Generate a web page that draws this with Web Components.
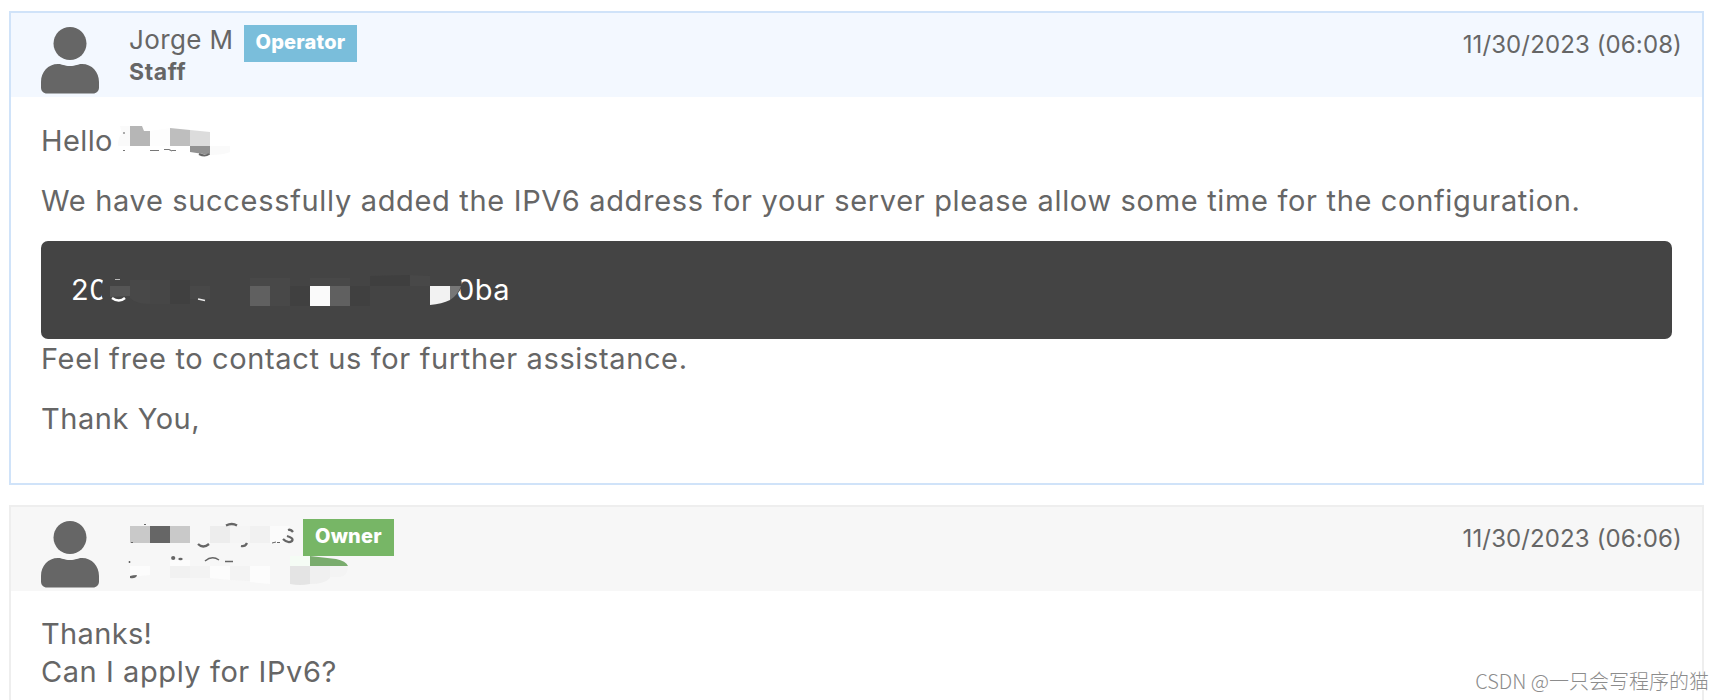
<!DOCTYPE html>
<html lang="en">
<head>
<meta charset="utf-8">
<title>Ticket</title>
<style>
    html, body {
        margin: 0;
        height: 700px;
        overflow: hidden;
        background: #fff;
    }
    body {
        font-family: Inter, "Liberation Sans", sans-serif;
        color: #666;
    }
    svg { display: block; flex: none; overflow: visible; }
</style>
</head>
<body>
<ticket-thread>
    <ticket-reply kind="staff">
        <span slot="name">Jorge M</span>
        <role-badge slot="badge" color="#7abedb">Operator</role-badge>
        <span slot="detail">Staff</span>
        <span slot="date">11/30/2023 (06:08)</span>
        <reply-line gap style="letter-spacing: 0.4px">Hello
            <svg slot="mask" width="112" height="38" viewBox="118 122 112 38">
                <path d="M120 126h10v20h-12q0-10 4-12z" fill="#fafafa"/>
                <path d="M130 126h12l2 5h6v15h-20z" fill="#b6b6b6"/>
                <path d="M150 131l20-3v18h-20z" fill="#fdfdfd"/>
                <path d="M170 128l20 2v16h-20z" fill="#bebebe"/>
                <path d="M190 130l20 2v14h-20z" fill="#dcdcdc"/>
                <path d="M190 146h20v9l-20-3z" fill="#929292"/>
                <path d="M210 146h20v6q-6 3-20 3z" fill="#fafafa"/>
                <path d="M199 154q6 3 10 0" fill="none" stroke="#666" stroke-width="2"/>
                <path d="M150 150.500h9M164 149.500h5l3 1.500M172 150.500h4M124 132v2M123 150.500h2" fill="none" stroke="#777" stroke-width="1.200"/>
            </svg>
        </reply-line>
        <reply-line gap style="letter-spacing: 0.67px">We have successfully added the IPV6 address for your server please allow some time for the configuration.</reply-line>
        <code-box>
            <span>20</span>
            <svg width="346" height="38" viewBox="110 271 346 38">
                <path d="M103 280h27v22h-26q-5-10-1-22z" fill="#444"/>
                <path d="M112 298q7 5 13 0" fill="none" stroke="#fff" stroke-width="2.500"/>
                <path d="M115 279.500h5" fill="none" stroke="#bbb"/>
                <path d="M110 286h20v10l-20 1z" fill="#555"/>
                <path d="M130 280h20v24q-14 0-20-6z" fill="#484848"/>
                <path d="M150 280h20v24h-20z" fill="#464646"/>
                <path d="M170 280h20v24h-20z" fill="#404040"/>
                <path d="M190 286h20v13h-20z" fill="#484848"/>
                <path d="M198 299l7 1.500" fill="none" stroke="#eee" stroke-width="1.500"/>
                <path d="M250 278h40v8h-40zM270 286h20v20h-20zM310 278h40v8h-40z" fill="#484848"/>
                <path d="M250 286h20v20h-20zM330 286h20v20h-20z" fill="#606060"/>
                <path d="M290 286h20v20h-20zM350 286h20v20h-20z" fill="#404040"/>
                <path d="M310 286h20v20h-20z" fill="#fafafa"/>
                <path d="M370 276l40-1v11h-40z" fill="#3f3f3f"/>
                <path d="M410 275l20 1v10h-20z" fill="#484848"/>
            </svg>
            <span>0ba</span>
            <svg slot="over" width="34" height="38" viewBox="430 271 34 38">
                <path d="M450 277h11l1 9q-3 8-9 11h-3z" fill="#444"/>
                <path d="M430 286h20v14q-8 4-20 5z" fill="#f2f2f2"/>
                <path d="M450 286h11q-3 9-11 14z" fill="#777"/>
            </svg>
        </code-box>
        <reply-line gap style="letter-spacing: 0.63px">Feel free to contact us for further assistance.</reply-line>
        <reply-line gap style="letter-spacing: 0.55px">Thank You,</reply-line>
    </ticket-reply>
    <ticket-reply kind="owner">
        <svg slot="name" width="164" height="29" viewBox="129 519 164 29">
            <path d="M150 526h20v17h-20z" fill="#666"/>
            <path d="M130 526h20v17h-20zM170 526h20v17h-20z" fill="#c9c9c9"/>
            <path d="M210 526h20v17h-20z" fill="#ededed"/>
            <path d="M230 526h20v17h-20z" fill="#f5f5f5"/>
            <path d="M250 526h20v17h-20z" fill="#f1f1f1"/>
            <path d="M270 526h20l-8 17h-12z" fill="#fbfbfb"/>
            <path d="M198 544q5 5 11 0M226 525.500q6-3 11 0M241 546q4 1 6-3M288 530q3-1 5 2M283 539q5 5 9 2 2-3-5-5" fill="none" stroke="#666" stroke-width="2.300"/>
            <path d="M131 542.500h2M144 524.500h2M272 543l4-1M277 542.500h3" fill="none" stroke="#666"/>
        </svg>
        <role-badge slot="badge" color="#77b666">Owner</role-badge>
        <svg slot="detail" width="220" height="34" viewBox="129 551 220 34">
            <path d="M170 560h20v6h-20zM130 566h20v9l-20 2zM210 566h20v14l-20-2zM250 566h20v18l-20-2z" fill="#fcfcfc"/>
            <path d="M170 566h20v12h-20z" fill="#f1f1f1"/>
            <path d="M190 566h20v12h-20zM230 566h20v15l-20-1z" fill="#f3f3f3"/>
            <path d="M290 556h20v10h-20z" fill="#f5fcf5"/>
            <path d="M310 556l26 3q10 2 12 7h-38z" fill="#7aac6e"/>
            <path d="M290 566h20v18q-10 2-20 0z" fill="#e4e4e4"/>
            <path d="M310 566h20v12q-5 6-20 6z" fill="#f0f0f0"/>
            <path d="M330 566h18q0 10-8 11h-10z" fill="#f4f4f4"/>
            <circle cx="173.200" cy="558" r="2.100" fill="#666"/>
            <ellipse cx="180.500" cy="559" rx="2.200" ry="1.300" fill="#666"/>
            <path d="M130 576q3-1 7-1-1 4-7 3z" fill="#666"/>
            <path d="M205 561q7-6 14-1M225 561.500h8M129.500 561v2" fill="none" stroke="#666" stroke-width="1.500"/>
        </svg>
        <span slot="date">11/30/2023 (06:06)</span>
        <reply-line style="letter-spacing: 0.35px">Thanks!</reply-line>
        <reply-line style="letter-spacing: 0.57px">Can I apply for IPv6?</reply-line>
    </ticket-reply>
</ticket-thread>
<page-watermark>CSDN @一只会写程序的猫</page-watermark>

<script>
class TicketThread extends HTMLElement {
    connectedCallback() {
        this.attachShadow({ mode: 'open' });
        this.shadowRoot.innerHTML = `
            <style>
                :host {
                    display: flex;
                    flex-direction: column;
                    gap: 20px;
                    padding: 11px 20px 0 9px;
                }
            </style>
            <slot></slot>
        `;
    }
}

class TicketReply extends HTMLElement {
    connectedCallback() {
        this.attachShadow({ mode: 'open' });
        this.shadowRoot.innerHTML = `
            <style>
                :host {
                    display: block;
                    border: 2px solid #eee;
                    --head: #f7f7f7;
                }
                :host([kind="staff"]) {
                    border-color: #d0e3f9;
                    --head: #f3f8ff;
                }
                .head {
                    display: flex;
                    align-items: flex-start;
                    box-sizing: border-box;
                    height: 84px;
                    padding: 12px 20px 0 30px;
                    background: var(--head);
                }
                .avatar {
                    display: block;
                    flex: none;
                    margin: 2px 30px 0 0;
                }
                .who {
                    flex: 1;
                }
                .name {
                    display: flex;
                    align-items: flex-start;
                    gap: 10px;
                    height: 32px;
                    font-size: 26px;
                    line-height: 29px;
                    letter-spacing: 0.4px;
                    white-space: nowrap;
                }
                .detail {
                    font-size: 23px;
                    font-weight: 700;
                    line-height: 31px;
                    letter-spacing: 0.6px;
                }
                .date {
                    margin-top: 5px;
                    font-size: 24px;
                    line-height: 29px;
                    letter-spacing: 0.12px;
                    white-space: nowrap;
                }
                .body {
                    padding: 24px 30px;
                }
                :host([kind="staff"]) .body {
                    padding: 25px 30px 23px;
                }
            </style>
            <div class="head">
                <svg class="avatar" width="58" height="67" viewBox="0 0 58 67" fill="#666">
                    <circle cx="29" cy="16.500" r="16.500"/>
                    <path d="M17 37c4 0 6 2 12 2s8-2 12-2c10 0 17 8 17 18v5.500c0 3.500-2.500 6-6 6H6c-3.500 0-6-2.500-6-6v-5.500c0-10 7-18 17-18z"/>
                </svg>
                <div class="who">
                    <div class="name"><slot name="name"></slot><slot name="badge"></slot></div>
                    <div class="detail"><slot name="detail"></slot></div>
                </div>
                <div class="date"><slot name="date"></slot></div>
            </div>
            <div class="body"><slot></slot></div>
        `;
    }
}

class RoleBadge extends HTMLElement {
    connectedCallback() {
        this.attachShadow({ mode: 'open' });
        this.shadowRoot.innerHTML = `
            <style>
                :host {
                    display: block;
                    padding: 0 12px 2px;
                    background: ${this.getAttribute('color')};
                    color: #fff;
                    font-size: 20px;
                    font-weight: 800;
                    line-height: 35px;
                    letter-spacing: 0.2px;
                }
            </style>
            <slot></slot>
        `;
    }
}

class ReplyLine extends HTMLElement {
    connectedCallback() {
        this.attachShadow({ mode: 'open' });
        this.shadowRoot.innerHTML = `
            <style>
                :host {
                    display: flex;
                    gap: 5px;
                    font-size: 29px;
                    line-height: 38px;
                    white-space: nowrap;
                }
                :host([gap]) {
                    margin-bottom: 22px;
                }
            </style>
            <div><slot></slot></div>
            <slot name="mask"></slot>
        `;
    }
}

class CodeBox extends HTMLElement {
    connectedCallback() {
        this.attachShadow({ mode: 'open' });
        this.shadowRoot.innerHTML = `
            <style>
                :host {
                    display: flex;
                    position: relative;
                    margin: -1px 0 1px;
                    padding: 30px;
                    border-radius: 7px;
                    background: #444;
                    color: #fff;
                    font-size: 29px;
                    line-height: 38px;
                    letter-spacing: 0.5px;
                }
                ::slotted(span:first-child) {
                    width: 39px;
                }
                /* sits on top of the last characters */
                ::slotted([slot="over"]) {
                    position: absolute;
                    left: 389px;
                    top: 30px;
                }
            </style>
            <slot></slot>
            <slot name="over"></slot>
        `;
    }
}

class PageWatermark extends HTMLElement {
    connectedCallback() {
        this.attachShadow({ mode: 'open' });
        this.shadowRoot.innerHTML = `
            <style>
                :host {
                    position: absolute;
                    right: 15px;
                    bottom: 5px;
                    font: 300 20px/28px "Noto Sans CJK SC", sans-serif;
                    color: #8c8c8c;
                    text-shadow: 1px 1px 0 #fff;
                    white-space: nowrap;
                }
            </style>
            <slot></slot>
        `;
    }
}

customElements.define('ticket-thread', TicketThread);
customElements.define('ticket-reply', TicketReply);
customElements.define('role-badge', RoleBadge);
customElements.define('reply-line', ReplyLine);
customElements.define('code-box', CodeBox);
customElements.define('page-watermark', PageWatermark);
</script>
</body>
</html>
